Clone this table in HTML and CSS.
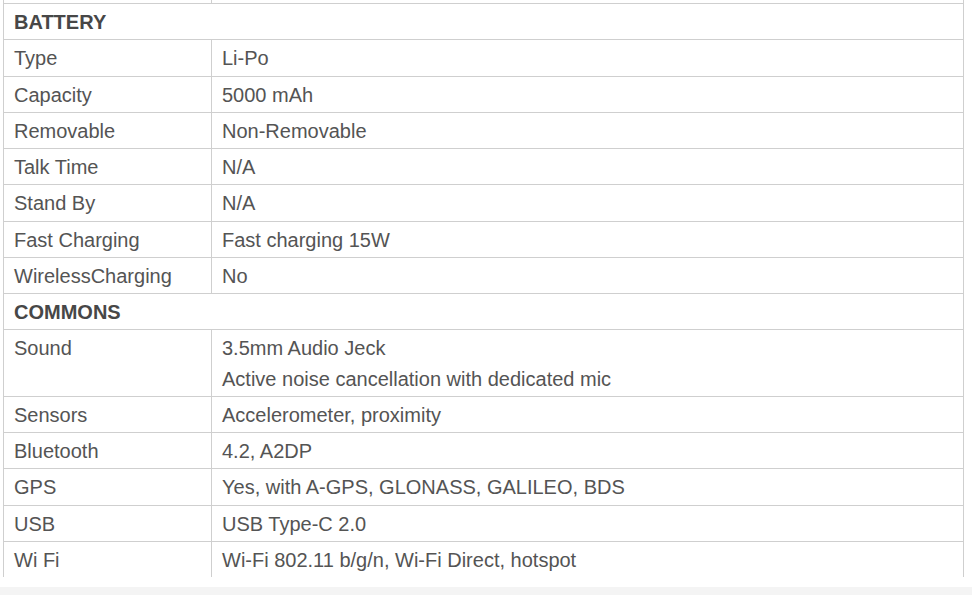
FILE: index.html
```html
<!DOCTYPE html>
<html lang="en">
<head>
<meta charset="utf-8">
<title>Specifications</title>
<link rel="stylesheet" href="styles.css">
</head>
<body>
<div class="spec-wrap">
  <table class="spec">
    <colgroup><col class="c-label"><col class="c-value"></colgroup>
    <tr class="stub"><td></td><td></td></tr>
    <tr class="section"><td colspan="2">BATTERY</td></tr>
    <tr><td>Type</td><td>Li-Po</td></tr>
    <tr><td>Capacity</td><td>5000 mAh</td></tr>
    <tr><td>Removable</td><td>Non-Removable</td></tr>
    <tr><td>Talk Time</td><td>N/A</td></tr>
    <tr><td>Stand By</td><td>N/A</td></tr>
    <tr><td>Fast Charging</td><td>Fast charging 15W</td></tr>
    <tr><td>WirelessCharging</td><td>No</td></tr>
    <tr class="section"><td colspan="2">COMMONS</td></tr>
    <tr><td>Sound</td><td>3.5mm Audio Jeck<br>Active noise cancellation with dedicated mic</td></tr>
    <tr><td>Sensors</td><td>Accelerometer, proximity</td></tr>
    <tr><td>Bluetooth</td><td>4.2, A2DP</td></tr>
    <tr><td>GPS</td><td>Yes, with A-GPS, GLONASS, GALILEO, BDS</td></tr>
    <tr><td>USB</td><td>USB Type-C 2.0</td></tr>
    <tr class="last"><td>Wi Fi</td><td>Wi-Fi 802.11 b/g/n, Wi-Fi Direct, hotspot</td></tr>
  </table>
</div>
<div class="footer-bar"></div>
</body>
</html>
```

FILE: styles.css
```css
html, body {
  margin: 0;
  padding: 0;
  background: #ffffff;
}

body {
  font-family: "Liberation Sans", Arial, sans-serif;
  font-size: 20px;
  color: #545454;
}

.spec-wrap {
  padding-left: 3px;
}

.spec {
  width: 961px;
  border-collapse: collapse;
  table-layout: fixed;
}

.c-label {
  width: 208px;
}

.spec td {
  border: 1px solid #cfcfcf;
  padding: 3px 10px 2px 10px;
  line-height: 30.25px;
  vertical-align: top;
  white-space: nowrap;
}

.spec .stub td {
  border-top: none;
  padding: 0;
  height: 3px;
  line-height: 0;
}

.spec .section td {
  font-weight: bold;
  color: #474747;
}

.spec .last td {
  border-bottom: none;
}

.footer-bar {
  margin-top: 10px;
  height: 10px;
  background: #f4f4f4;
}
```
